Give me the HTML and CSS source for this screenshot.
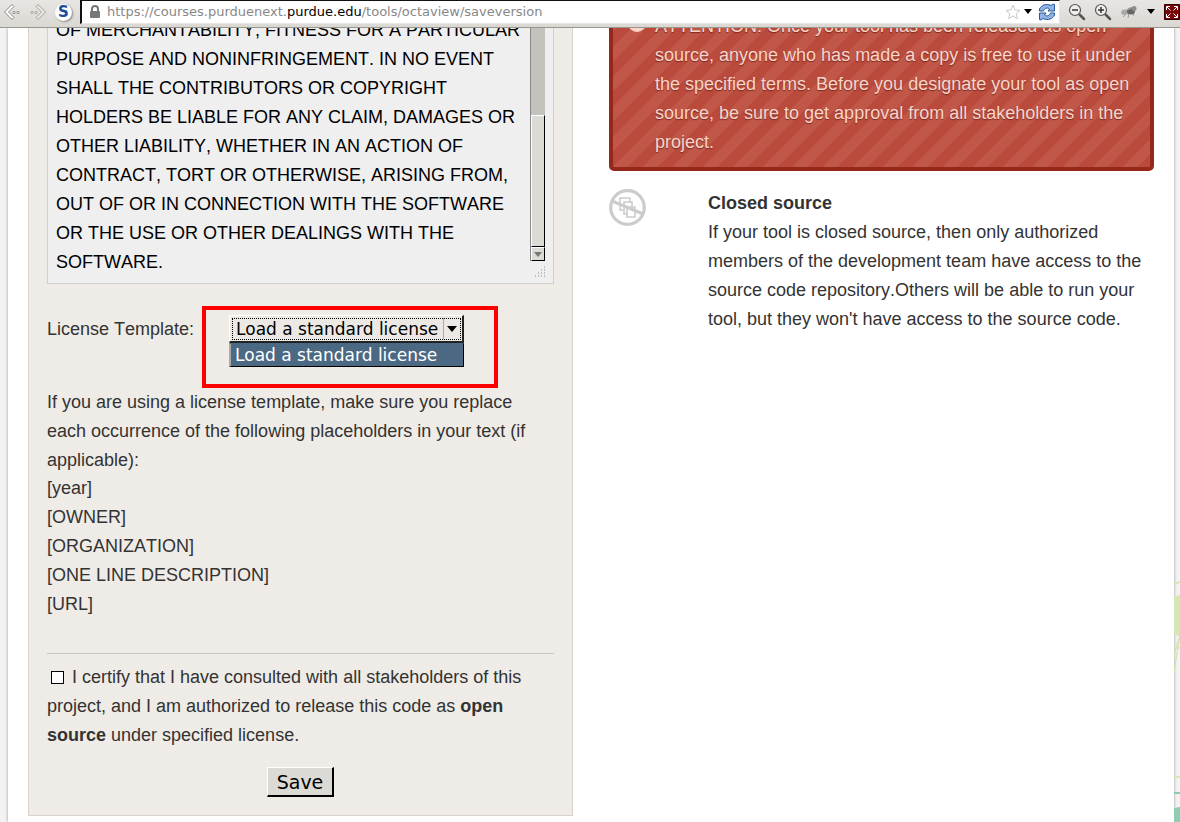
FILE: index.html
```html
<!DOCTYPE html>
<html lang="en">
<head>
<meta charset="utf-8">
<title>Save version</title>
<link rel="stylesheet" href="styles.css">
</head>
<body>
<header class="toolbar">
  <button class="tool" aria-label="Back"><svg width="18" height="18" viewBox="0 0 18 18" fill="#fff" stroke="#8a8882"><path d="M9 1.5 1.5 9 9 16.500 11 14.500 5.500 9 11 3.500z"/><path d="M10 8.500h2v2h-2zM14 8.500h2v2h-2z" stroke-width=".8"/></svg></button>
  <button class="tool" aria-label="Forward"><svg width="18" height="18" viewBox="0 0 18 18" fill="#eceae6" stroke="#a3a19b"><path d="M9 1.500 16.500 9 9 16.500 7 14.500 12.500 9 7 3.500z"/><path d="M6 8.500h2v2H6zM2 8.500h2v2H2z" stroke-width=".8"/></svg></button>
  <button class="tool site" aria-label="Script options">S</button>
  <div class="address">
    <svg class="lock" width="12" height="14" viewBox="0 0 12 14"><path d="M3 7V4a3 3 0 0 1 6 0v3" fill="none" stroke="#777" stroke-width="2"/><rect x="1" y="6" width="10" height="7" rx="1" fill="#777"/></svg>
    <div class="url" role="textbox" aria-label="Address" contenteditable="true" spellcheck="false">https://courses.purduenext.<span class="domain">purdue.edu</span>/tools/octaview/saveversion</div>
    <button class="tool" aria-label="Bookmark"><svg width="16" height="16" viewBox="0 0 16 16"><path d="m8 1 2 5 5 .4-3.800 3.300 1.200 5L8 12l-4.400 2.700 1.200-5L1 6.400 6 6z" fill="#fff" stroke="#c9c9c9"/></svg></button>
    <button class="tool arrow" aria-label="Address history"><svg width="10" height="6" viewBox="0 0 10 6"><path d="M1 0h8L5 5z"/></svg></button>
    <button class="tool reload" aria-label="Reload"><svg width="18" height="18" viewBox="0 0 18 18" fill="#8fb4e5" stroke="#28569b"><path d="M1.500 8V6C3 2.500 8 0 13 2.500L15 1l1.500.5V8H10l1.500-2C9 4 6.500 5.500 5.500 8z"/><path d="M16.500 10v2C15 15.500 10 18 5 15.500L3 17l-1.500-.5V10H8l-1.500 2c2.500 2 5 .5 6-2z"/></svg></button>
  </div>
  <button class="tool" aria-label="Zoom out"><svg width="18" height="18" viewBox="0 0 18 18" fill="none" stroke="#555"><path d="m11.500 11.500 4.500 4.500" stroke-width="2.500" stroke-linecap="round"/><circle cx="7" cy="7" r="5.500" fill="#efeeeb" stroke-width="1.200"/><path d="M4 7h6" stroke="#333" stroke-width="1.500"/></svg></button>
  <button class="tool" aria-label="Zoom in"><svg width="18" height="18" viewBox="0 0 18 18" fill="none" stroke="#555"><path d="m11.500 11.500 4.500 4.500" stroke-width="2.500" stroke-linecap="round"/><circle cx="7" cy="7" r="5.500" fill="#efeeeb" stroke-width="1.200"/><path d="M4 7h6M7 4v6" stroke="#333" stroke-width="1.500"/></svg></button>
  <button class="tool" aria-label="Firebug"><svg width="18" height="16" viewBox="0 0 18 16"><path d="m6 7-4-1M7 9l-4 4M9 9l-1 5M12 8l2 4M12 6l4-1" stroke="#999"/><ellipse cx="6" cy="8" rx="5" ry="2.500" fill="#a9a9a6" transform="rotate(-15 6 8)"/><ellipse cx="11" cy="7" rx="4" ry="3.500" fill="#666"/><circle cx="14" cy="4.500" r="2.500" fill="#8c8c8c"/><path d="m7 6 4-2" stroke="#bbb"/></svg></button>
  <button class="tool" aria-label="Firebug menu"><svg width="10" height="6" viewBox="0 0 10 6"><path d="M1 0h8L5 5z"/></svg></button>
  <button class="tool" aria-label="Full screen"><svg width="16" height="16" viewBox="0 0 16 16"><path fill="#7a0808" stroke="#320000" d="M.5.500h15v15H.500z"/><path d="m3 3 3.500 3.500M13 3 9.500 6.500M3 13l3.500-3.500M13 13 9.500 9.500M2.500 6V2.500H6M10 2.500h3.500V6M2.500 10v3.500H6M10 13.500h3.500V10" stroke="#fff" fill="none"/></svg></button>
</header>
<div class="viewport">
  <main class="page">
    <form class="license">
      <div class="text-wrap">
        <textarea class="license-text" aria-label="License text" spellcheck="false">OF MERCHANTABILITY, FITNESS FOR A PARTICULAR
PURPOSE AND NONINFRINGEMENT. IN NO EVENT
SHALL THE CONTRIBUTORS OR COPYRIGHT
HOLDERS BE LIABLE FOR ANY CLAIM, DAMAGES OR
OTHER LIABILITY, WHETHER IN AN ACTION OF
CONTRACT, TORT OR OTHERWISE, ARISING FROM,
OUT OF OR IN CONNECTION WITH THE SOFTWARE
OR THE USE OR OTHER DEALINGS WITH THE
SOFTWARE.</textarea>
        <div class="scroll">
          <div class="thumb"></div>
          <div class="down"><svg width="8" height="5" viewBox="0 0 8 5"><path d="M0 0h8L4 5z" fill="#777"/></svg></div>
        </div>
        <svg class="grip" width="12" height="12" viewBox="0 0 12 12"><path d="M10 1h1M7 4h1M10 4h1M4 7h1M7 7h1M10 7h1M1 10h1M4 10h1M7 10h1M10 10h1" stroke="#888"/></svg>
      </div>
      <div class="template">
        <label for="template">License Template:</label>
        <div class="highlight">
          <div class="combo">
            <select id="template" class="select"><option>Load a standard license</option></select>
            <svg class="caret" width="10" height="6" viewBox="0 0 10 6"><path d="M0 0h10L5 6z"/></svg>
          </div>
          <div class="options" role="listbox" aria-label="License templates"><div role="option" aria-selected="true">Load a standard license</div></div>
        </div>
      </div>
      <p>If you are using a license template, make sure you replace each occurrence of the following placeholders in your text (if applicable):</p>
      <ul class="placeholders">
        <li>[year]</li>
        <li>[OWNER]</li>
        <li>[ORGANIZATION]</li>
        <li>[ONE LINE DESCRIPTION]</li>
        <li>[URL]</li>
      </ul>
      <div class="certify">
        <input type="checkbox" id="certify" class="check"><label for="certify">I certify that I have consulted with all stakeholders of this project, and I am authorized to release this code as <strong>open source</strong> under specified license.</label>
      </div>
      <div class="submit"><button type="button" class="save">Save</button></div>
    </form>
    <aside class="notes">
      <div class="alert">
        <svg width="18" height="18" viewBox="0 0 18 18"><circle cx="9" cy="9" r="9" fill="#fbd5ca"/><path d="M9 3v7" stroke="#b94a3c" stroke-width="2"/></svg>
        <p>ATTENTION: Once your tool has been released as open source, anyone who has made a copy is free to use it under the specified terms. Before you designate your tool as open source, be sure to get approval from all stakeholders in the project.</p>
      </div>
      <section class="closed">
        <svg width="37" height="37" viewBox="0 0 37 37" fill="none" stroke="#ccc"><g stroke-width="1.600"><path d="M14 21h-3V9h10v4"/><path d="M18 25h-3V13h8v5"/><path d="M18 18h8v10h-8z"/></g><circle cx="18.500" cy="18.500" r="16.800" stroke-width="3.200"/><path d="m3 12 31 13" stroke-width="3"/></svg>
        <div>
          <h2>Closed source</h2>
          <p>If your tool is closed source, then only authorized members of the development team have access to the source code repository.Others will be able to run your tool, but they won't have access to the source code.</p>
        </div>
      </section>
    </aside>
  </main>
  <svg class="map" width="6" height="244" viewBox="0 0 6 244" fill="none"><path d="m0 6 6-2" stroke="#cfe3a5" stroke-width="1.500"/><path d="m0 19 6-2v42l-6-4z" fill="#d5e8b4"/><path d="m0 94 6-37M0 70h6M0 77l5-17" stroke="#cfe3a5"/><path d="M0 199h6" stroke="#d5e8b4" stroke-width="2"/><path d="M0 215h6" stroke="#8fcdb0" stroke-width="2"/><path d="m0 230 6-1v15H0z" fill="#8fcdb0"/></svg>
</div>
</body>
</html>
```
FILE: styles.css
```css
* { box-sizing: border-box; }
body {
  margin: 0;
  height: 100vh;
  overflow: hidden;
  display: flex;
  flex-direction: column;
  background: #f3f3f3;
  color: #333;
  font: 18px/29px "Liberation Sans", Arial, sans-serif;
  font-kerning: none;
}
p, h2, ul { margin: 0; padding: 0; }
h2 { font-size: 18px; line-height: 29px; }
ul { list-style: none; }

.toolbar {
  flex: none;
  height: 28px;
  display: flex;
  align-items: center;
  gap: 8px;
  padding: 0 0 3px 3px;
  background: linear-gradient(#e8e6e3, #dad8d3);
  border-bottom: 1px solid #99968e;
}
.tool { display: flex; padding: 0; border: 0; background: none; }
.site {
  width: 17px;
  height: 17px;
  justify-content: center;
  align-items: center;
  border-radius: 50%;
  background: #fff;
  box-shadow: 1px 1px 2px #888;
  color: #1d4c9c;
  font: bold 15px/17px "DejaVu Sans", sans-serif;
}
.address {
  flex: 1;
  height: 24px;
  display: flex;
  align-items: center;
  gap: 6px;
  padding: 0 3px 0 7px;
  background: #fff;
  border: 1px solid #e8e6e3;
  border-left: 2px solid #111;
  border-top: 1px solid #111;
}
.url {
  flex: 1;
  color: #888;
  font: 13px/20px "DejaVu Sans", sans-serif;
  white-space: nowrap;
  outline: 0;
}
.domain { color: #000; }
.arrow { margin: 0 -1px 0 -4px; }

.viewport {
  flex: 1;
  display: flex;
  min-height: 0;
  overflow: hidden;
  padding-left: 8px;
}
.page {
  flex: 1;
  display: grid;
  grid-template-columns: 1fr 1fr;
  gap: 36px;
  align-items: start;
  padding: 0 20px;
  background: #fff;
  box-shadow: 0 0 3px #999;
}
.map { align-self: flex-end; }

.license {
  padding: 0 18px 18px;
  background: #efece7;
  border: 1px solid #d9d2cb;
  border-top: 0;
}
.text-wrap {
  display: grid;
  margin-top: -13px;
}
.text-wrap > * { grid-area: 1 / 1; }
.license-text {
  width: 100%;
  height: 269px;
  padding: 0 8px;
  border: 1px solid #d0d0d0;
  border-radius: 0;
  background: #efefef;
  color: #000;
  font: inherit;
  font-kerning: none;
  white-space: pre;
  overflow: hidden;
  resize: none;
  outline: 0;
}
.scroll {
  justify-self: end;
  display: flex;
  flex-direction: column;
  width: 15px;
  margin: 0 9px 23px 0;
  padding-top: 100px;
  background: #c3c2bd;
  border-left: 1px solid #888;
}
.thumb, .down {
  background: #dcdad5;
  border: 1px solid #fff;
  border-right-color: #000;
  border-bottom-color: #000;
}
.thumb { flex: 1; }
.down { height: 14px; display: grid; place-items: center; }
.grip { place-self: end; margin: 0 8px 6px 0; }

.template {
  display: flex;
  gap: 8px;
  margin-top: 22px;
}
.template label { padding-top: 9px; white-space: nowrap; }
.highlight {
  width: 296px;
  height: 82px;
  padding: 5px 30px 0 23px;
  border: 4px solid #f00;
}
.combo { display: grid; }
.combo > * { grid-area: 1 / 1; }
.select {
  appearance: none;
  width: 100%;
  height: 28px;
  padding: 0 0 0 6px;
  border: 1px solid #fff;
  border-right: 2px solid #222;
  border-bottom: 2px solid #222;
  border-radius: 0;
  background: linear-gradient(#aaa, #aaa) 213px 2px / 1px 21px no-repeat #ece9e5;
  color: #000;
  font: 17px/24px "DejaVu Sans", sans-serif;
  outline: 1px dotted #000;
  outline-offset: -4px;
}
.caret { place-self: center end; margin-right: 7px; pointer-events: none; }
.options {
  height: 24px;
  padding-left: 4px;
  background: #4b6983;
  border: 1px solid #000;
  border-left: 2px solid #aaa;
  border-top-color: #4b6983;
  color: #fff;
  font: 17px/22px "DejaVu Sans", sans-serif;
  white-space: nowrap;
}
.placeholders { margin-top: -1px; }
.certify {
  margin-top: 34px;
  padding-top: 9px;
  border-top: 1px solid #c8c5c2;
}
.check {
  appearance: none;
  width: 13px;
  height: 13px;
  margin: 0 8px 0 4px;
  border: 1px solid #000;
  background: #fff;
  vertical-align: -1px;
}
.submit { display: flex; justify-content: center; margin-top: 17px; }
.save {
  height: 30px;
  padding: 0 9px;
  background: #dcdad5;
  border: 1px solid #fff;
  border-right: 2px solid #000;
  border-bottom: 2px solid #000;
  color: #000;
  font: 19px/26px "DejaVu Sans", sans-serif;
}

.notes { margin-top: -24px; }
.alert {
  display: flex;
  gap: 9px;
  padding: 4px 15px 10px;
  border: 4px solid #96281b;
  border-radius: 5px;
  background: linear-gradient(135deg, #c05748 25%, #b94a3c 25% 50%, #c05748 50% 75%, #b94a3c 75%) 0 100% / 30px 30px;
  color: #fbd5ca;
  text-shadow: 0 1px 1px #7a2a20;
}
.alert svg { flex: none; margin-top: 2px; }
.closed {
  display: grid;
  grid-template-columns: 37px 1fr;
  gap: 62px;
  margin-top: 18px;
}
```
